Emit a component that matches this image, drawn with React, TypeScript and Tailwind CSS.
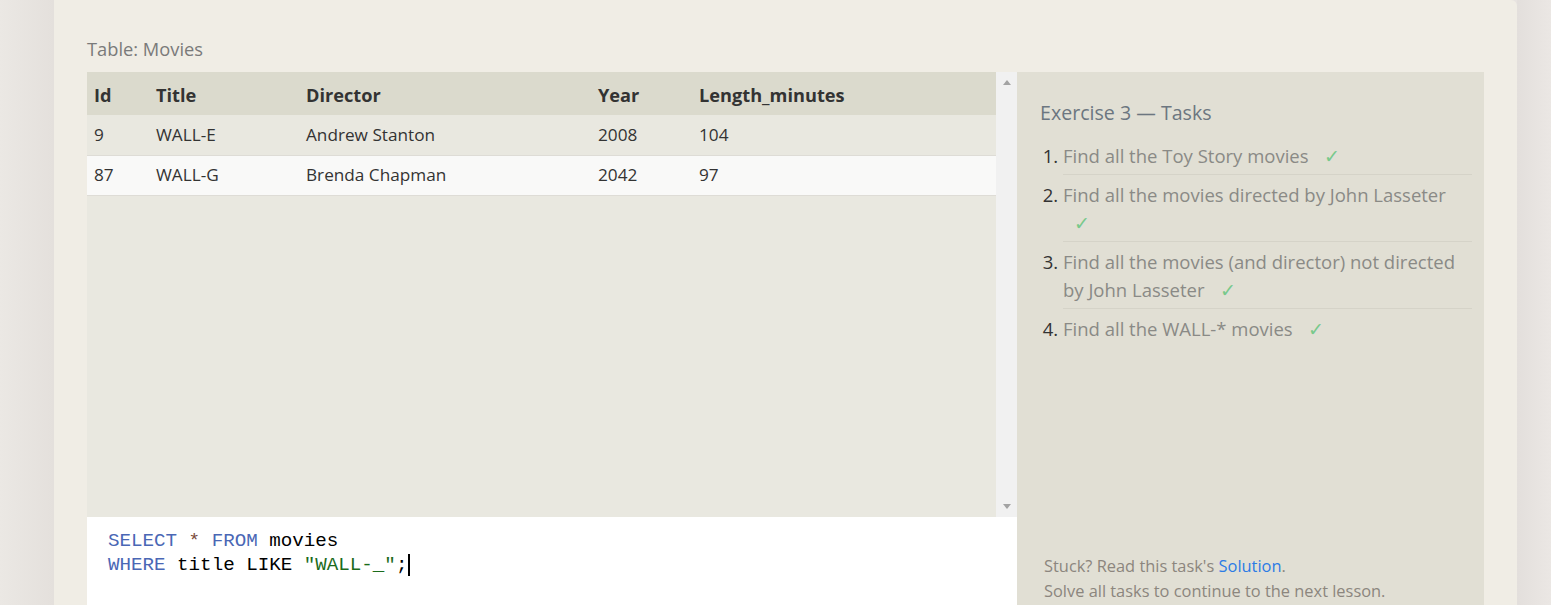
import React from 'react';

const rows = [
  { id: '9', title: 'WALL-E', director: 'Andrew Stanton', year: '2008', len: '104' },
  { id: '87', title: 'WALL-G', director: 'Brenda Chapman', year: '2042', len: '97' },
];

const tasks = [
  'Find all the Toy Story movies',
  'Find all the movies directed by John Lasseter',
  'Find all the movies (and director) not directed by John Lasseter',
  'Find all the WALL-* movies',
];

function Check() {
  return <span className="ml-[11px] inline-block text-[19px] leading-[24px] text-[#78c98b]">✓</span>;
}

export default function App() {
  return (
    <div
      className="flex h-[605px] w-full overflow-hidden bg-[#e7e3e0]"
      style={{ fontFamily: '"Open Sans", "Noto Sans", sans-serif' }}
    >
      <div className="w-[54px] shrink-0 bg-gradient-to-r from-[#ebe8e4] to-[#e4e0dc]" />

      {/* Lesson card */}
      <div className="flex w-[1463px] shrink-0 flex-col rounded-tr-md bg-[#f0ede5] px-[33px]">
        <div className="pt-[36px] pb-[11px] text-[18.3px] leading-[25px] text-[#7a7a7a]">Table: Movies</div>

        <div className="flex flex-1">
          {/* Left: results + editor */}
          <div className="flex w-[930px] flex-col">
            <div className="flex h-[445px] bg-[#e9e8e0]">
              <div className="flex-1">
                <table className="w-full border-collapse text-left">
                  <thead>
                    <tr className="h-[43px] bg-[#dbdacd] text-[18.2px] font-bold text-[#333]">
                      <th className="w-[69px] pt-[4px] pl-[7px] font-bold">Id</th>
                      <th className="w-[150px] pt-[4px] font-bold">Title</th>
                      <th className="w-[292px] pt-[4px] font-bold">Director</th>
                      <th className="w-[101px] pt-[4px] font-bold">Year</th>
                      <th className="pt-[4px] font-bold">Length_minutes</th>
                    </tr>
                  </thead>
                  <tbody className="text-[17.2px] text-[#333]">
                    {rows.map((r, i) => (
                      <tr
                        key={r.id}
                        className={`h-[40px] border-b border-[#dedcd6] ${i === 1 ? 'bg-[#f9f9f8]' : 'bg-[#e9e8e0]'}`}
                      >
                        <td className="pl-[7px]">{r.id}</td>
                        <td>{r.title}</td>
                        <td>{r.director}</td>
                        <td>{r.year}</td>
                        <td>{r.len}</td>
                      </tr>
                    ))}
                  </tbody>
                </table>
              </div>
              {/* scrollbar */}
              <div className="flex w-[21px] flex-col items-center justify-between bg-[#f1f1f1] py-[8px]">
                <div className="h-0 w-0 border-x-[4px] border-b-[5px] border-x-transparent border-b-[#a3a3a3]" />
                <div className="h-0 w-0 border-x-[4px] border-t-[5px] border-x-transparent border-t-[#a3a3a3]" />
              </div>
            </div>

            {/* SQL editor */}
            <div
              className="flex-1 bg-white px-[21px] pt-[12px] text-[19.2px] leading-[24px]"
              style={{ fontFamily: '"Liberation Mono", "DejaVu Sans Mono", monospace' }}
            >
              <div>
                <span className="text-[#4a67b5]">SELECT</span>
                <span className="text-[#7a4b3a]"> * </span>
                <span className="text-[#4a67b5]">FROM</span>
                <span className="text-black"> movies</span>
              </div>
              <div className="flex items-center">
                <span className="text-[#4a67b5]">WHERE</span>
                <span className="whitespace-pre text-black"> title LIKE </span>
                <span className="text-[#1b6b1b]">"WALL-_"</span>
                <span className="text-black">;</span>
                <span className="ml-[1px] h-[22px] w-[2px] bg-black" />
              </div>
            </div>
          </div>

          {/* Right: tasks */}
          <div className="flex flex-1 flex-col bg-[#e1dfd4] pl-[23px] pr-[12px]">
            <div className="pt-[27px] text-[19.6px] leading-[28px] text-[#6c7680]">Exercise 3 — Tasks</div>
            <ol className="mt-[9px] list-outside list-decimal pl-[23px] text-[18.5px] leading-[28px] text-[#8a8a86] marker:text-[#333]">
              {tasks.map((t, i) => (
                <li
                  key={t}
                  className={`pt-[6px] pb-[4px] ${i < tasks.length - 1 ? 'border-b border-[#d5d3c8]' : ''}`}
                >
                  {t} <Check />
                </li>
              ))}
            </ol>
            <div className="mt-auto pb-[2px] pl-[4px] text-[16.4px] leading-[25px] text-[#8c867e]">
              <div>
                Stuck? Read this task's <span className="text-[#2c7be5]">Solution</span>.
              </div>
              <div>Solve all tasks to continue to the next lesson.</div>
            </div>
          </div>
        </div>
      </div>

      <div className="flex-1 bg-gradient-to-r from-[#e3dfdc] to-[#ebe7e4]" />
    </div>
  );
}
